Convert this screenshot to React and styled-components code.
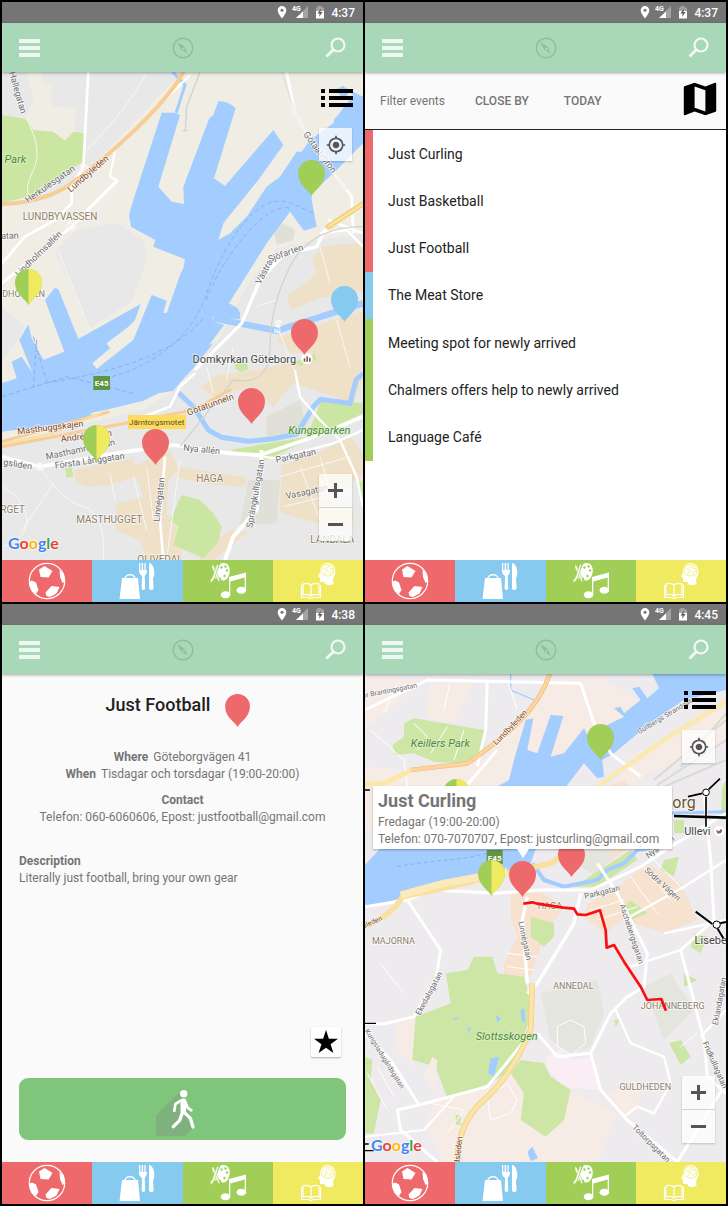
import React from "react";
import styled, { createGlobalStyle } from "styled-components";
import { MdMap, MdGpsFixed } from "react-icons/md";

const GlobalStyle = createGlobalStyle`
  *, *::before, *::after { box-sizing: border-box; }
  body { margin: 0; background: #000; font-family: Roboto, "Liberation Sans", sans-serif; color: #757575; }
  button { font: inherit; color: inherit; border: 0; padding: 0; margin: 0; background: none; cursor: pointer; }
  a { color: inherit; text-decoration: none; }
  svg { display: block; }
  ul { list-style: none; margin: 0; padding: 0; }
  h2, p { margin: 0; }
`;

const palette = {
  red: "#ee696b",
  blue: "#87caef",
  green: "#a0ce56",
  yellow: "#f0ea61",
};

/* ---------- layout ---------- */

const Board = styled.main`
  display: grid;
  grid-template-columns: repeat(2, minmax(0, 1fr));
  gap: 2px;
  padding: 2px;
`;

const Screen = styled.section`
  display: flex;
  flex-direction: column;
  min-height: 600px;
  background: #fafafa;
  overflow: hidden;
`;

const StatusBar = styled.div`
  display: flex;
  align-items: center;
  justify-content: flex-end;
  gap: 7px;
  height: 21px;
  padding-right: 8px;
  background: #757575;
  color: #fff;
  font-size: 12px;
  font-weight: 500;
`;

const AppBar = styled.header`
  display: flex;
  align-items: center;
  justify-content: space-between;
  height: 49px;
  padding: 0 17px;
  background: #a9d8b9;
  box-shadow: 0 1px 3px rgba(0, 0, 0, 0.35);
  position: relative;
  z-index: 2;
`;

const Content = styled.div`
  flex: 1;
  display: flex;
  flex-direction: column;
`;

const TabBar = styled.nav`
  display: grid;
  grid-template-columns: repeat(4, 1fr);
  height: 42px;
`;

const Tab = styled.a`
  display: flex;
  justify-content: center;
  background: ${(p) => p.$color};
  overflow: hidden;
`;

/* ---------- map ---------- */

const MapArea = styled.div`
  position: relative;
  flex: 1;
  min-height: 488px;
  overflow: hidden;
  background: #efede4;
`;

const MapCanvas = styled.svg`
  width: 100%;
  height: 488px;
`;

const ViewToggle = styled.button`
  position: absolute;
  top: 16px;
  right: 10px;
`;

const LocateButton = styled.button`
  position: absolute;
  top: 56px;
  right: 11px;
  width: 33px;
  height: 33px;
  display: flex;
  align-items: center;
  justify-content: center;
  color: #555;
  background: rgba(255, 255, 255, 0.75);
  box-shadow: 0 1px 2px rgba(0, 0, 0, 0.2);
`;

const ZoomControl = styled.div`
  position: absolute;
  right: 11px;
  bottom: 19px;
  width: 33px;
  display: flex;
  flex-direction: column;
  background: rgba(255, 255, 255, 0.75);
  box-shadow: 0 1px 2px rgba(0, 0, 0, 0.2);
`;

const ZoomButton = styled.button`
  height: 33px;
  display: flex;
  align-items: center;
  justify-content: center;
  & + & { height: 34px; border-top: 1px solid #d4d4d4; }
`;

const PinButton = styled.button`
  position: absolute;
  left: ${(p) => p.$x}px;
  top: ${(p) => p.$y}px;
`;

const GoogleMark = styled.span`
  position: absolute;
  left: 6px;
  bottom: 7px;
  font-family: Lato, Roboto, sans-serif;
  font-size: 16px;
  line-height: 20px;
  font-weight: 700;
  text-shadow: 0 0 2px #fff, 0 0 2px #fff;
`;

const Letter = styled.span`
  color: ${(p) => p.$color};
`;

const InfoWindow = styled.article`
  position: absolute;
  left: 8px;
  top: 112px;
  padding: 5px 5px 1px;
  background: #fff;
  box-shadow: 0 1px 2px rgba(0, 0, 0, 0.3);
  white-space: nowrap;
  font-size: 12px;
  line-height: 17px;
  min-width: 299px;
  &::after {
    content: "";
    position: absolute;
    left: 144px;
    top: 100%;
    border: 6px solid transparent;
    border-top: 9px solid #fff;
  }
`;

const InfoTitle = styled.h2`
  font-size: 18px;
  line-height: 20px;
  margin-bottom: 3px;
  font-weight: 700;
`;

/* ---------- list ---------- */

const FilterBar = styled.div`
  display: flex;
  align-items: center;
  height: 58px;
  padding: 0 8px 0 15px;
  border-bottom: 1px solid #222;
  font-size: 12px;
`;

const FilterButton = styled.button`
  font-weight: 500;
  margin-left: ${(p) => p.$gap}px;
`;

const MapToggle = styled.button`
  margin-left: auto;
  margin-bottom: 4px;
  color: #000;
`;

const EventList = styled.ul`
  display: grid;
  grid-auto-rows: 1fr;
  min-height: 331px;
`;

const EventPane = styled.div`
  flex: 1;
  background: #fff;
`;

const EventRow = styled.li`
  display: flex;
  align-items: center;
  border-left: 8px solid ${(p) => p.$color};
  padding-left: 15px;
  font-size: 14px;
  color: #222;
`;

/* ---------- detail ---------- */

const Detail = styled.div`
  flex: 1;
  display: flex;
  flex-direction: column;
  padding: 20px 17px 22px;
  font-size: 12px;
  line-height: 17px;
`;

const TitleRow = styled.div`
  display: flex;
  justify-content: center;
  gap: 15px;
  padding-right: 8px;
  margin-bottom: 22px;
`;

const DetailTitle = styled.h2`
  font-size: 18px;
  line-height: 21px;
  font-weight: 500;
  color: #212121;
`;

const Facts = styled.div`
  text-align: ${(p) => p.$align};
  margin-bottom: ${(p) => p.$after}px;
`;

const Term = styled.strong`
  font-weight: 700;
  margin-right: ${(p) => (p.$inline ? 5 : 0)}px;
`;

const FavouriteButton = styled.button`
  width: 30px;
  height: 30px;
  margin: auto 5px 21px auto;
  display: flex;
  align-items: center;
  justify-content: center;
  border-radius: 2px;
  background: #fff;
  box-shadow: 0 1px 2px rgba(0, 0, 0, 0.3);
`;

const RouteButton = styled.button`
  height: 62px;
  border-radius: 9px;
  background: #7fc67c;
  display: flex;
  align-items: center;
  justify-content: center;
`;

/* ---------- icons ---------- */

const StatusIcons = () => (
  <svg width="47" height="15" viewBox="0 0 47 15">
    <path d="M5 1a4.300 4.300 0 0 0-4.300 4.300C.7 8.500 5 13.500 5 13.500s4.300-5 4.300-8.200A4.300 4.300 0 0 0 5 1z" fill="#fff" />
    <circle cx="5" cy="5.300" r="1.500" fill="#757575" />
    <text x="15" y="6" fontSize="7" fontWeight="700" fill="#fff">4G</text>
    <path d="M31 1v12H19z" fill="#a3a3a3" />
    <path d="M26 6.500V13h-7z" fill="#fff" />
    <path d="M40.500 1h4v1.500H47V6h-8V2.500h1.500z" fill="#a3a3a3" />
    <path d="M39 6h8v7.500h-8z" fill="#fff" />
    <path d="M44 3.500L40.500 8.500h2.200l-.7 3.500L45.600 7h-2.200z" fill="#5c5c5c" />
  </svg>
);

const MenuIcon = () => (
  <svg width="21" height="18" viewBox="0 0 21 18" fill="#fff" fillOpacity="0.8">
    <path d="M0 0h21v4H0zM0 7h21v4H0zM0 14h21v4H0z" />
  </svg>
);

const CompassIcon = () => (
  <svg width="22" height="22" viewBox="0 0 22 22">
    <circle cx="11" cy="11" r="9.800" fill="none" stroke="#8fbd9e" strokeWidth="1.400" />
    <path d="M5 5l7.500 4.500L15.500 16.500 9.300 12.500z" fill="#8fbd9e" />
    <circle cx="11.500" cy="11.800" r="1.200" fill="#a9d8b9" />
  </svg>
);

const SearchIcon = () => (
  <svg width="21" height="21" viewBox="0 0 21 21" fill="none" stroke="#fff" strokeOpacity="0.85">
    <circle cx="13" cy="8" r="6.500" strokeWidth="2.200" />
    <path d="M8.300 12.700L1.500 19.500" strokeWidth="2.800" />
  </svg>
);

const ListIcon = () => (
  <svg width="32" height="20" viewBox="0 0 32 20" fill="#000">
    <path d="M0 1h4v4H0zM8 1h24v4H8zM0 8h4v4H0zM8 8h24v4H8zM0 15h4v4H0zM8 15h24v4H8z" />
  </svg>
);

const BallIcon = () => (
  <svg width="90" height="42" viewBox="0 0 90 42" fill="#fff">
    <circle cx="45" cy="21" r="17.700" fill="none" stroke="#fff" strokeWidth="1.200" />
    <path d="M37 9.500L42.500 6 50.500 11 46.500 17.500 38.500 17z" />
    <path d="M27 22L30 20.500 34 22.500 36.500 30 34 34 29.500 31z" />
    <path d="M43.500 32.500L49.500 26 57.500 27 54.500 33.500 48 37 44.500 36z" />
    <path d="M57.500 10L61.500 13.500 63 21.500 60.500 23 58 17z" />
  </svg>
);

const ShopIcon = () => (
  <svg width="90" height="42" viewBox="0 0 90 42" fill="#fff">
    <path d="M30 18h16l2 21H27.500z" />
    <path d="M32.500 20c0-7 11-7 11 0" fill="none" stroke="#fff" strokeWidth="1.300" />
    <path d="M47 3h1.300v7h1.300V3h1.500v7h1.300V3h1.300v7h1.300V3C55 3 55 10 55 11c0 3-2 4-2.300 5l.5 12c0 2.500-3.600 2.500-3.600 0l.5-12C49 15 47 14 47 11z" />
    <path d="M57 3c5 0 7 12 4 15.500l.6 9.500c0 2.700-4.600 2.700-4.600 0z" />
  </svg>
);

const ArtsIcon = () => (
  <svg width="90" height="42" viewBox="0 0 90 42">
    <g fill="#fff">
      <path d="M40 3c6 0 7.500 5 6.500 10s-4 8-7 7.500c-2-.5-1-3-3-3s-3 2-4 1 0-6 2-8c2-4 2-7.500 5.500-7.500z" />
      <path d="M29 4l2 2 6 15-1.500.7L29 8z" stroke="#a0ce56" strokeWidth="0.600" />
      <path d="M34 4l1.500 1L32 17l-1.500 3-3 3c-1-3 1-4 2-6z" stroke="#a0ce56" strokeWidth="0.600" />
      <path d="M46 17l17-4.500V30h-1.300V17.500L47.300 21.500V35H46z" />
      <ellipse cx="42.500" cy="34.700" rx="4.800" ry="3.500" />
      <ellipse cx="58.300" cy="30.300" rx="4.800" ry="3.500" />
    </g>
    <g fill="#a0ce56">
      <circle cx="38.500" cy="7.500" r="1.200" />
      <circle cx="42.500" cy="6.500" r="1.200" />
      <circle cx="44" cy="10.500" r="1.200" />
      <circle cx="41.500" cy="16" r="1.200" />
    </g>
  </svg>
);

const LearnIcon = () => (
  <svg width="90" height="42" viewBox="0 0 90 42">
    <path d="M54 3c5.500 0 8.500 4 8.500 8.500 0 4-2 6-2.500 8l.5 4.500c-3 1.500-6 1.500-8.500 0l-.5-2H47v-4l-2-1.500 2-4C47 6.500 50 3 54 3z" fill="#fff" />
    <g fill="none" stroke="#f0ea61" strokeWidth="0.800">
      <path d="M48.500 13c-1.500-4 1-8.500 5.500-8.500 4 0 7 3 7 6.500 0 3-1 4-3 4-2 2-7 1-9.500-2z" />
      <path d="M50 8.500c2 2 4 1 4-2M56 5.500c0 3 1 4 4 3M52 14c0-3 2-4 4-3M57 14c0-2 1-3 3-2.500" />
    </g>
    <g fill="none" stroke="#fff" strokeWidth="1.200">
      <path d="M30 24c3-1 6-1 8 1 2-2 5-2 8-1v11c-3-1-6-1-8 1-2-2-5-2-8-1zM38 25v11" />
      <path d="M28.500 25v12.500h7l2.500 1 2.500-1h7V25" />
    </g>
  </svg>
);

const WalkIcon = () => (
  <svg width="54" height="54" viewBox="465 216 162 162">
    <path d="M538 246L465 316V378H552L580 352 548 260z" fill="#7eb17d" />
    <g fill="none" stroke="#fff" strokeLinecap="round" strokeLinejoin="round">
      <circle cx="548" cy="251" r="11" fill="#fff" stroke="none" />
      <path d="M547 273V305" strokeWidth="17" />
      <path d="M541 271L523 282 520 303" strokeWidth="8" />
      <path d="M553 276L560 293 571 301" strokeWidth="8" />
      <path d="M543 311L536 331 517 350" strokeWidth="10" />
      <path d="M551 308L568 325 576 351" strokeWidth="10" />
    </g>
  </svg>
);

const StarIcon = () => (
  <svg width="24" height="24" viewBox="0 0 24 24">
    <path d="M12 0l2.900 8.800H24l-7.400 5.400L19.400 23 12 17.700 4.600 23l2.800-8.800L0 8.800h9.100z" />
  </svg>
);

const PinShape = ({ color, half, width = 28, height = 36 }) => (
  <svg width={width} height={height} viewBox="0 0 28 36">
    <path d="M13.500 36C10.500 30 0 25 0 13.500a13.500 13.500 0 0 1 27 0C27 25 16.500 30 13.500 36z" fill={color} />
    {half && <path d="M13.500 36V0a13.500 13.500 0 0 1 13.500 13.500C27 25 16.500 30 13.500 36z" fill={half} />}
  </svg>
);

/* ---------- map drawings ---------- */

const labelStyles = {
  street: { fill: "#6b6b6b", halo: "#fff" },
  route: { fill: "#7d4a2c", halo: "#fff" },
  city: { fill: "#6b5430", halo: "#fff" },
  area: { fill: "#8d8068", halo: "#fff" },
  park: { fill: "#4b8a3c", halo: "#e3f2cd", italic: true },
  place: { fill: "#444", halo: "#fff" },
  shield: { fill: "#fff", halo: "none", bold: true },
};

const MapLabels = ({ items }) =>
  items.map(([text, x, y, angle, size, kind]) => {
    const s = labelStyles[kind];
    return (
      <text
        key={text + x}
        transform={`translate(${x} ${y}) rotate(${angle})`}
        fontSize={size}
        fill={s.fill}
        stroke={s.halo}
        strokeOpacity="0.7"
        strokeWidth="5"
        paintOrder="stroke"
        textAnchor="middle"
        fontStyle={s.italic ? "italic" : "normal"}
        fontWeight={s.bold ? 700 : 400}
      >
        {text}
      </text>
    );
  });

const harbourLabels = [
  ["Hallegatan", 45, 280, 74, 27, "street"],
  ["Park", 46, 488, 0, 33, "park"],
  ["Herkulesgatan", 155, 560, -35, 27, "street"],
  ["Lundbyleden", 270, 528, -41, 27, "route"],
  ["LUNDBYVASSEN", 180, 661, 0, 30, "area"],
  ["atan", 30, 716, -2, 27, "street"],
  ["Lindholmsallén", 122, 768, -44, 27, "street"],
  ["LINDHOLMEN", 50, 891, 0, 27, "area"],
  ["Götaälvbron", 953, 462, 53, 27, "street"],
  ["Västra", 800, 820, -62, 27, "street"],
  ["Sjöfarten", 860, 768, -20, 27, "street"],
  ["E45", 842, 980, -83, 24, "shield"],
  ["Domkyrkan Göteborg", 733, 1088, 0, 33, "place"],
  ["Masthuggskajen", 152, 1291, -7, 27, "route"],
  ["Andréegatan", 260, 1317, -7, 27, "route"],
  ["Masthamnsgatan", 243, 1357, -12, 27, "street"],
  ["Första Långgatan", 270, 1391, -8, 27, "street"],
  ["gsliden", 52, 1402, 9, 27, "street"],
  ["Götatunneln", 634, 1222, -20, 27, "route"],
  ["Nya allén", 604, 1357, 6, 27, "street"],
  ["Kungsparken", 958, 1301, 0, 33, "park"],
  ["Parkgatan", 889, 1376, -12, 27, "street"],
  ["Vasagatan", 922, 1484, -12, 27, "street"],
  ["Sprängkullsgatan", 775, 1482, -80, 27, "street"],
  ["Linnégatan", 486, 1500, -83, 27, "street"],
  ["HAGA", 629, 1447, 0, 30, "area"],
  ["MASTHUGGET", 328, 1568, 0, 30, "area"],
  ["RGET", 38, 1538, 0, 30, "area"],
  ["LANDALA", 997, 1628, 0, 30, "area"],
  ["OLIVEDAL", 480, 1690, 0, 30, "area"],
];

const HarbourMap = () => (
  <MapCanvas viewBox="6 216 1083 1464" preserveAspectRatio="xMidYMid slice" role="img" aria-label="Map of Göteborg harbour">
    <path d="M6 216H1089V1680H6z" fill="#efede4" />
    <g fill="#e8e8e8">
      <path d="M6 216H80L100 300 75 355 6 345z" />
      <path d="M125 216H545L255 520 225 400 228 325 155 318V250H125z" />
      <path d="M80 560L150 500 240 480 235 545 140 600z" />
      <path d="M232 690L350 668 432 720 440 780 395 905 268 985 165 755z" />
      <path d="M6 925L75 975 55 1020 6 1080z" />
      <path d="M6 1330L430 1230 540 1160 660 1010 740 860 830 745 960 720 1089 700V1680H6z" />
    </g>
    <g fill="#efe0c8">
      <path d="M965 740L1089 725V870L960 895 875 930 860 890 915 850 950 820 935 780z" />
      <path d="M830 1015L1000 960 1089 935V1100L1060 1140 950 1110 905 1060 870 1060z" />
      <path d="M770 1110L905 1080 1089 1130 1060 1210 880 1150 820 1220 760 1160 640 1190 600 1160 655 1125z" />
      <path d="M225 1410L400 1375 410 1430 330 1455 260 1460 225 1445z" />
      <path d="M400 1400L510 1350 535 1410 505 1440 500 1540 540 1600 545 1680H440L420 1620 345 1590 350 1510 430 1490z" />
      <path d="M530 1400L740 1432 735 1460 640 1455 530 1435z" />
      <path d="M845 1395L960 1355 1050 1310 1089 1360V1430L960 1480 1060 1530V1570H950L840 1535z" />
      <path d="M600 1660L690 1590 745 1595 640 1680H600z" />
    </g>
    <g fill="#e0e0d8">
      <path d="M800 1250L900 1200 920 1290 800 1320z" />
      <path d="M745 1440H840L830 1570 720 1575z" />
      <path d="M820 690L850 670 885 690 880 720 830 735z" />
    </g>
    <g fill="#cbe6a3">
      <path d="M6 345L80 357 100 390 160 395 195 422 220 395 255 400 250 485 180 525 120 580 6 610z" />
      <path d="M545 1485L600 1500 640 1540 665 1580 655 1625 610 1675 520 1635 535 1580 510 1560z" />
      <path d="M965 1200L1089 1210V1240L800 1380 690 1350 920 1310z" />
      <path d="M195 1405L215 1402 220 1430 200 1433z" />
      <path d="M885 1085L945 1060 950 1080 900 1098zM705 1090L740 1085 745 1108 720 1117 706 1105z" />
      <path d="M1070 1450L1089 1440V1510z" />
    </g>

    <path
      fill="#a3ccff"
      d="M6 1295L180 1272 270 1250 275 1238 325 1228 430 1202 475 1180 520 1172 545 1142 580 1105 640 1030 627 1035 672 975 640 965 637 950 720 958 720 940 713 925 687 910 800 730 870 635 912 692 950 680 935 600 935 580 1000 520 1089 430V290L1030 260 1000 370 930 420 905 455 890 455 840 530 800 560 740 650 690 700 655 720 670 670 710 620 775 540 850 435 820 390 675 558 642 535 707 325 Q690 305 655 303L640 345 628 355 550 560 552 612 515 605 475 560 540 345 520 338 485 338 400 600 387 645 393 680 465 720 460 740 555 778 550 805 540 825 500 940 490 938 500 902 455 885 400 1020 290 1107 277 1090 330 1045 320 1030 385 980 405 960 422 912 235 1017 175 868 165 863 135 900 193 1055 130 1080 95 1015 85 973 58 1020 98 1120 65 1070 35 1085 50 1135 6 1150z"
    />
    <path d="M1030 260L1060 285 1010 350 985 370 1000 310z" fill="#efede4" />
    <path d="M1008 268L1030 258 1048 275 1030 300z" fill="#a3ccff" />
    <g fill="none" stroke="#a3ccff">
      <path d="M518 216L555 255 528 340" strokeWidth="9" />
      <path d="M640 955L830 992 1089 910" strokeWidth="19" />
      <path d="M535 1178L580 1220 625 1290 665 1312 745 1324 820 1316 890 1302 940 1220 962 1198 1050 1210 1068 1140 1089 1120" strokeWidth="15" />
    </g>
    <g fill="none" stroke="#86b2f3" strokeWidth="3" strokeDasharray="14 8">
      <path d="M335 1130C480 1090 580 1000 620 880S760 570 870 608L940 640" />
      <path d="M610 955C540 1040 400 1110 130 1150" />
      <path d="M620 900C660 780 800 600 870 625" />
      <path d="M100 1010L145 1160M110 1020L100 1160M6 1190L200 1130 400 1180" />
    </g>

    <g fill="none" stroke="#fff" strokeWidth="8" strokeLinejoin="round">
      <path d="M265 216L250 500 215 560 215 610 165 660 75 710 6 790" />
      <path d="M355 540L215 680 6 850" />
      <path d="M570 225L345 450 330 530 350 540 260 630" strokeWidth="6" />
      <path d="M860 216L885 340 960 460 1055 590 1060 700" />
      <path d="M585 1120L540 1160 510 1220 430 1250" />
      <path d="M585 1110L725 970 780 840 850 765 950 740 975 690 1089 620" strokeWidth="10" />
      <path d="M6 1370L120 1400 380 1355 520 1335 690 1360 780 1365 930 1315 1089 1250" strokeWidth="11" />
      <path d="M690 1358L830 1375 1000 1330 1089 1290" strokeWidth="7" />
      <path d="M495 1370L480 1560 490 1680" />
      <path d="M785 1350L770 1530 700 1610 675 1680" strokeWidth="12" />
      <path d="M885 1110L900 1190 960 1260 1020 1320 1070 1430 1089 1520" strokeWidth="7" />
      <path d="M985 660L1089 700M960 700L1040 690 1089 740" />
    </g>
    <g fill="none" stroke="#f7f7f5" strokeWidth="3">
      <path d="M440 220Q380 330 260 450M80 357Q130 450 100 510T90 590M175 755L268 985M6 1460Q80 1500 80 1560T6 1640M120 1400Q180 1500 250 1520T310 1680" />
      <path d="M960 740L990 850M1010 960L1050 1100M840 1000L890 1130M770 920L830 900M900 1400L960 1560M960 1370L1010 1540M840 1430L1050 1370M850 1520L1060 1470M440 1400L460 1560M400 1430L440 1590M540 1380L500 1680M700 1040L680 1140M620 1100L640 1180M330 1420L345 1500M160 1450L60 1600" />
      <circle cx="120" cy="1400" r="9" strokeWidth="6" />
      <circle cx="213" cy="678" r="11" strokeWidth="6" />
      <circle cx="252" cy="503" r="9" strokeWidth="5" />
    </g>
    <g fill="none" stroke="#d3d3cf" strokeWidth="4">
      <path d="M600 216L560 320 556 392M548 392H564" />
      <path d="M1089 680Q930 680 870 800T810 1040 700 1140L540 1340" />
      <path d="M845 216L890 350 1040 570" strokeWidth="2" />
    </g>
    <g fill="none" stroke="#f8cd94" strokeLinecap="round">
      <path d="M550 216C500 310 330 470 200 560Q120 608 6 612" strokeWidth="12" />
      <path d="M6 1325L325 1236M6 1340L240 1295 400 1265 580 1230 690 1170" strokeWidth="9" />
      <path d="M6 1332L160 1300 300 1240" stroke="#fbdf9b" strokeWidth="6" />
      <path d="M985 680L1089 612" stroke="#f3d488" strokeWidth="18" />
    </g>
    <path d="M985 680L1089 612" stroke="#fff4c4" strokeWidth="3" />
    <path d="M280 1128h50v42h-50z" fill="#5f9440" />
    <path d="M384 1245h174v42H384z" fill="#fbdb61" />
    <circle cx="921" cy="1076" r="17" fill="#fff" />
    <path d="M911 1085v-10h5v10zM919 1085v-16h5v16zM927 1085v-12h5v12z" fill="#8b5a55" />
    <MapLabels
      items={[
        ...harbourLabels,
        ["E45", 305, 1158, 0, 24, "shield"],
      ]}
    />
    <text x="470" y="1276" textAnchor="middle" fontSize="24" fill="#5b4a1d">Järntorgsmotet</text>
  </MapCanvas>
);

const cityLabels = [
  ["or Brantingsgatan", 78, 278, -11, 21, "street"],
  ["Keillers Park", 229, 440, 0, 33, "park"],
  ["Lundbyleden", 444, 388, -46, 24, "route"],
  ["Gullbergs Strandgata", 910, 352, -31, 21, "street"],
  ["Göteborg", 896, 624, 0, 48, "city"],
  ["Ullevi", 1000, 704, 0, 33, "place"],
  ["E45", 392, 784, 0, 24, "shield"],
  ["Nya allén", 893, 748, -34, 24, "street"],
  ["Parkgatan", 716, 884, -14, 24, "street"],
  ["Södra Vägen", 890, 858, 42, 24, "street"],
  ["HAGA", 558, 927, 0, 27, "area"],
  ["Aschebergsgatan", 796, 1004, 72, 24, "street"],
  ["Linnégatan", 475, 1024, 78, 24, "street"],
  ["MAJORNA", 88, 1032, 0, 27, "area"],
  ["Lisebe", 1040, 1032, 0, 33, "place"],
  ["sleden", 28, 972, -24, 21, "route"],
  ["ANNEDAL", 628, 1167, 0, 27, "area"],
  ["Ekedalsgatan", 202, 1184, -62, 24, "street"],
  ["JOHANNEBERG", 926, 1227, 0, 27, "area"],
  ["Slottsskogen", 428, 1319, 0, 33, "park"],
  ["Kungsladugårdsgatan", 56, 1380, 58, 21, "street"],
  ["GULDHEDEN", 844, 1471, 0, 27, "area"],
  ["Eklandagatan", 1074, 1205, -80, 24, "street"],
  ["Fridkullagatan", 1046, 1398, 66, 24, "street"],
  ["Toltorpsgatan", 856, 1636, 45, 24, "street"],
  ["dsleden", 291, 1652, -84, 24, "route"],
];

const CityMap = () => (
  <MapCanvas viewBox="3 222 1083 1464" preserveAspectRatio="xMidYMid slice" role="img" aria-label="Map of central Göteborg with walking route">
    <path d="M3 222H1086V1686H3z" fill="#eeebee" />
    <g fill="#f6ece5">
      <path d="M3 230L180 240 60 340 3 390zM200 250L330 240 270 370 190 350z" />
      <path d="M560 240L700 230 860 320 600 560 3 680V500L140 515 340 490 470 370z" />
      <path d="M800 470L1086 300V420L850 520 720 640z" />
      <path d="M100 1260L150 1250 150 1400 90 1340zM215 1500L370 1460 440 1420 620 1470 760 1540 700 1686H240L180 1580z" />
      <path d="M730 1480L830 1440 820 1540 770 1550z" />
    </g>
    <g fill="#f6e2cf">
      <path d="M440 880L520 870 600 920 540 1010 500 1130H420V1090L460 1010 440 960z" />
      <path d="M670 910L740 880 850 790 950 850 1000 960 900 1000 780 960 720 1000 660 950z" />
      <path d="M570 700L800 740 720 800 660 790 560 740zM630 600L780 540 800 560 700 590z" />
    </g>
    <g fill="#e4e5dd">
      <path d="M530 1180L700 1140 720 1240 680 1340 620 1360 560 1320z" />
      <path d="M840 1160L920 1120 990 1230 900 1320z" />
      <path d="M660 720L750 760 700 830 650 800z" />
    </g>
    <path d="M550 1370L590 1350 630 1380 680 1370 710 1470 600 1460 550 1410z" fill="#fbedf4" />
    <g fill="#cee6a5">
      <path d="M120 370L150 355 240 370 300 380 362 390 360 450 300 490 210 485 150 460 95 465 85 435 120 410z" />
      <path d="M245 1120L310 1110 330 1070 385 1070 400 1120 480 1130 505 1230 450 1400 380 1450 250 1495 215 1400 145 1380 155 1250 260 1210z" />
      <path d="M205 1370L220 1380 215 1450 235 1500 180 1430z" fill="#f6ece5" />
      <path d="M470 1380L540 1390 560 1430 620 1470 600 1560 545 1610 470 1560 480 1480 440 1420z" />
      <path d="M500 950L570 970 570 1010 540 1040 500 1010z" />
      <path d="M630 860L800 750 820 780 700 860z" />
      <path d="M780 920L800 900 850 940 800 960zM900 780L945 770 930 830 890 810z" />
      <path d="M915 1330L950 1320 980 1370 950 1395zM750 1260L770 1255 755 1280z" />
      <path d="M3 1370L25 1380 20 1440 50 1500 30 1600H3z" />
      <path d="M275 1545H290V1575H275zM930 660H960V700H930zM1075 560L1086 540V660H1070zM990 1000L1030 1010 1010 1060 980 1040zM960 1120L1000 1140 960 1160z" />
    </g>
    <g fill="#a3ccff">
      <path d="M3 925V795L90 700 150 690 260 640 435 540 450 480 485 360 508 355 490 450 520 460 560 345 598 348 560 470 600 460 660 385 670 405 780 350 750 325 770 320 780 340 830 300 805 265 825 260 850 295 885 265 865 222H1086V270L960 300 870 360 750 460 715 480 720 530 700 535 660 490 560 620 500 790 430 820 200 870z" />
      <path d="M395 1245L410 1255 400 1270zM470 1230L480 1225 485 1265H473zM380 1375L405 1370 390 1430 372 1420zM490 1655L505 1640 522 1675 500 1683zM265 1255L285 1252 275 1260zM310 1285L320 1280 315 1300z" />
    </g>
    <g fill="none" stroke="#a3ccff">
      <path d="M440 222V270L510 300" strokeWidth="4" />
      <path d="M505 790L540 840 600 860 700 840 730 810 780 790 820 750 880 740" strokeWidth="12" />
      <path d="M900 640L1086 635" strokeWidth="9" />
    </g>
    <path d="M85 700L190 690 180 730 110 740zM230 650L330 620 320 690 260 700z" fill="#f6ece5" />
    <path d="M100 800C250 770 380 790 480 700" fill="none" stroke="#86b2f3" strokeWidth="3" strokeDasharray="12 8" />

    <g fill="none" stroke="#fff" strokeWidth="9" strokeLinejoin="round">
      <path d="M3 330L190 240 650 250 690 370 740 460 830 530" />
      <path d="M370 240L365 390 340 500M400 450L270 600" />
      <path d="M3 920L130 900 200 870 400 880 530 870 680 870 830 800 920 740 1086 640" />
      <path d="M130 900L230 1050 215 1140 150 1250 60 1272 3 1270" />
      <path d="M490 890L475 960 490 1150M650 880L630 970 520 1150 490 1180" strokeWidth="10" />
      <path d="M3 1300L80 1380 165 1515 370 1460 500 1300M165 1515L100 1530 110 1590 220 1686" />
      <path d="M520 1300L580 1370 680 1360 740 1240 790 1190 840 1160 850 1060 760 880 700 790" />
      <path d="M680 1360L710 1470 790 1560 940 1686 1086 1450" />
      <path d="M755 1230L800 1330 900 1370 920 1450 870 1540 820 1520 780 1550" strokeWidth="7" />
      <path d="M1020 580L1040 780 1050 960 950 1050 1020 1320 1030 1430 1086 1480" />
      <path d="M780 960L960 860 1086 780M900 1000L1086 960M800 1100L950 1050M1010 1310L1086 1230" strokeWidth="7" />
      <path d="M3 1610L180 1590 270 1490" strokeWidth="6" />
    </g>
    <g fill="none" stroke="#fff" strokeWidth="3">
      <path d="M20 390L120 480 130 560M100 250L60 340M260 240L240 330M430 240L460 330M150 370L190 410 160 450M250 380L200 460M300 390L270 480M430 1060L520 1070M430 1100L510 1110M680 930L780 900M700 960L820 920M840 800L920 900M800 830L880 940M870 780L960 870M10 1420L70 1530M40 1400L90 1490M370 1490L430 1450 460 1500 440 1540 380 1560zM580 1280L620 1260 660 1280 665 1330 620 1365 580 1340zM200 1510L300 1530 250 1600M50 1090L120 1180M950 1340L1000 1300" />
    </g>
    <path d="M870 540L1086 360M880 555L1086 420M900 560L1086 480M950 500L1086 340" fill="none" stroke="#d9d9d6" strokeWidth="6" />
    <g fill="none" strokeLinejoin="round">
      <path d="M558 222Q530 300 470 360T310 490L140 510" stroke="#efbb7d" strokeWidth="14" />
      <path d="M558 222Q530 300 470 360T310 490L140 510" stroke="#fbd59b" strokeWidth="10" />
      <path d="M140 512L60 550 3 552" stroke="#fbe8a8" strokeWidth="14" />
      <path d="M1086 305L900 420 700 560" stroke="#f9e9b4" strokeWidth="15" />
      <path d="M3 980Q90 940 115 890L240 865 430 820 560 790 620 750" stroke="#f9e0a0" strokeWidth="17" />
      <path d="M110 885L240 850 430 815" stroke="#fbeabb" strokeWidth="22" />
      <path d="M505 1150L500 1290Q440 1430 360 1500T280 1686" stroke="#ecd08a" strokeWidth="17" />
      <path d="M505 1150L500 1290Q440 1430 360 1500T280 1686" stroke="#fce4a4" strokeWidth="12" />
    </g>
    <path d="M368 750h48v42h-48z" fill="#5f9440" />
    <circle cx="1066" cy="693" r="16" fill="#fff" />
    <path d="M1056 690l9 4 6-7 4 4-4 8-10 2z" fill="#8b5a55" />
    <MapLabels items={cityLabels} />
    <g fill="none" stroke="#000">
      <path d="M930 648L1086 653" strokeWidth="8" />
      <path d="M1026 590V680M972 590L1015 580M1034 568L1068 536" strokeWidth="5" />
      <circle cx="1026" cy="577" r="10" fill="#fff" strokeWidth="3" />
      <path d="M995 935L1045 972M1060 985L1078 1015M1068 970L1086 966" strokeWidth="6" />
      <circle cx="1058" cy="974" r="11" fill="#fff" strokeWidth="3" />
      <path d="M3 570H18M3 1270H36M3 1632H14M3 1652H30" strokeWidth="4" />
    </g>
    <path
      d="M478 911L505 907 520 911 598 923 630 926 640 943 665 945 708 931 725 990 728 1043 750 1035 762 1055 780 1085 830 1160 850 1200 892 1197 906 1232"
      fill="none"
      stroke="#fb0d12"
      strokeWidth="8"
      strokeLinejoin="round"
    />
  </MapCanvas>
);

/* ---------- shared parts ---------- */

const tabs = [
  { name: "Sports", color: palette.red, Icon: BallIcon },
  { name: "Food and shopping", color: palette.blue, Icon: ShopIcon },
  { name: "Arts and music", color: palette.green, Icon: ArtsIcon },
  { name: "Learning", color: palette.yellow, Icon: LearnIcon },
];

const Phone = ({ time, children }) => (
  <Screen>
    <StatusBar>
      <StatusIcons />
      <time>{time}</time>
    </StatusBar>
    <AppBar>
      <button aria-label="Menu"><MenuIcon /></button>
      <CompassIcon />
      <button aria-label="Search"><SearchIcon /></button>
    </AppBar>
    <Content>{children}</Content>
    <TabBar aria-label="Categories">
      {tabs.map(({ name, color, Icon }) => (
        <Tab key={name} href="#" aria-label={name} $color={color}><Icon /></Tab>
      ))}
    </TabBar>
  </Screen>
);

const googleLetters = [
  ["G", "#4285f4"], ["o", "#ea4335"], ["o", "#fbbc05"],
  ["g", "#4285f4"], ["l", "#34a853"], ["e", "#ea4335"],
];

const MapView = ({ drawing, pins, children }) => (
  <MapArea>
    {drawing}
    {pins.map((p) => (
      <PinButton key={`${p.x}-${p.y}`} $x={p.x} $y={p.y} aria-label={p.name}>
        <PinShape color={p.color} half={p.half} />
      </PinButton>
    ))}
    {children}
    <ViewToggle aria-label="Show list"><ListIcon /></ViewToggle>
    <LocateButton aria-label="My location"><MdGpsFixed size={20} /></LocateButton>
    <ZoomControl>
      <ZoomButton aria-label="Zoom in">
        <svg width="15" height="15" viewBox="0 0 15 15" fill="#555"><path d="M6 0h3v6h6v3H9v6H6V9H0V6h6z" /></svg>
      </ZoomButton>
      <ZoomButton aria-label="Zoom out">
        <svg width="15" height="3" viewBox="0 0 15 3" fill="#555"><path d="M0 0h15v3H0z" /></svg>
      </ZoomButton>
    </ZoomControl>
    <GoogleMark>
      {googleLetters.map(([letter, color], i) => (
        <Letter key={i} $color={color}>{letter}</Letter>
      ))}
    </GoogleMark>
  </MapArea>
);

const harbourPins = [
  { name: "Language Café", x: 296, y: 88, color: palette.green },
  { name: "Meeting spot", x: 13, y: 197, color: palette.green, half: palette.yellow },
  { name: "The Meat Store", x: 329, y: 214, color: palette.blue },
  { name: "Just Basketball", x: 289, y: 247, color: palette.red },
  { name: "Just Football", x: 236, y: 316, color: palette.red },
  { name: "Just Curling", x: 140, y: 357, color: palette.red },
  { name: "Chalmers help", x: 81, y: 353, color: palette.green, half: palette.yellow },
];

const cityPins = [
  { name: "Language Café", x: 222, y: 50, color: palette.green },
  { name: "Meeting spot", x: 78, y: 105, color: palette.green, half: palette.yellow },
  { name: "Just Football", x: 193, y: 167, color: palette.red },
  { name: "Chalmers help", x: 113, y: 186, color: palette.green, half: palette.yellow },
  { name: "Just Curling", x: 144, y: 187, color: palette.red },
];

const events = [
  ["Just Curling", palette.red],
  ["Just Basketball", palette.red],
  ["Just Football", palette.red],
  ["The Meat Store", palette.blue],
  ["Meeting spot for newly arrived", palette.green],
  ["Chalmers offers help to newly arrived", palette.green],
  ["Language Café", palette.green],
];

export default function App() {
  return (
    <>
      <GlobalStyle />
      <Board>
        <Phone time="4:37">
          <MapView drawing={<HarbourMap />} pins={harbourPins} />
        </Phone>

        <Phone time="4:37">
          <FilterBar>
            <span>Filter events</span>
            <FilterButton $gap={30}>CLOSE BY</FilterButton>
            <FilterButton $gap={35}>TODAY</FilterButton>
            <MapToggle aria-label="Show map"><MdMap size={36} viewBox="2 2 20 20" /></MapToggle>
          </FilterBar>
          <EventPane>
            <EventList>
              {events.map(([name, color]) => (
                <EventRow key={name} $color={color}><a href="#">{name}</a></EventRow>
              ))}
            </EventList>
          </EventPane>
        </Phone>

        <Phone time="4:38">
          <Detail>
            <TitleRow>
              <DetailTitle>Just Football</DetailTitle>
              <PinShape color={palette.red} width={26} height={33} />
            </TitleRow>
            <Facts $align="center" $after={9}>
              <p><Term $inline>Where</Term>Göteborgvägen 41</p>
              <p><Term $inline>When</Term>Tisdagar och torsdagar (19:00-20:00)</p>
            </Facts>
            <Facts $align="center" $after={27}>
              <p><Term>Contact</Term></p>
              <p>Telefon: 060-6060606, Epost: justfootball@gmail.com</p>
            </Facts>
            <Facts $align="left" $after={0}>
              <p><Term>Description</Term></p>
              <p>Literally just football, bring your own gear</p>
            </Facts>
            <FavouriteButton aria-label="Add to favourites"><StarIcon /></FavouriteButton>
            <RouteButton aria-label="Walk there"><WalkIcon /></RouteButton>
          </Detail>
        </Phone>

        <Phone time="4:45">
          <MapView drawing={<CityMap />} pins={cityPins}>
            <InfoWindow>
              <InfoTitle>Just Curling</InfoTitle>
              <p>Fredagar (19:00-20:00)</p>
              <p>Telefon: 070-7070707, Epost: justcurling@gmail.com</p>
            </InfoWindow>
          </MapView>
        </Phone>
      </Board>
    </>
  );
}
